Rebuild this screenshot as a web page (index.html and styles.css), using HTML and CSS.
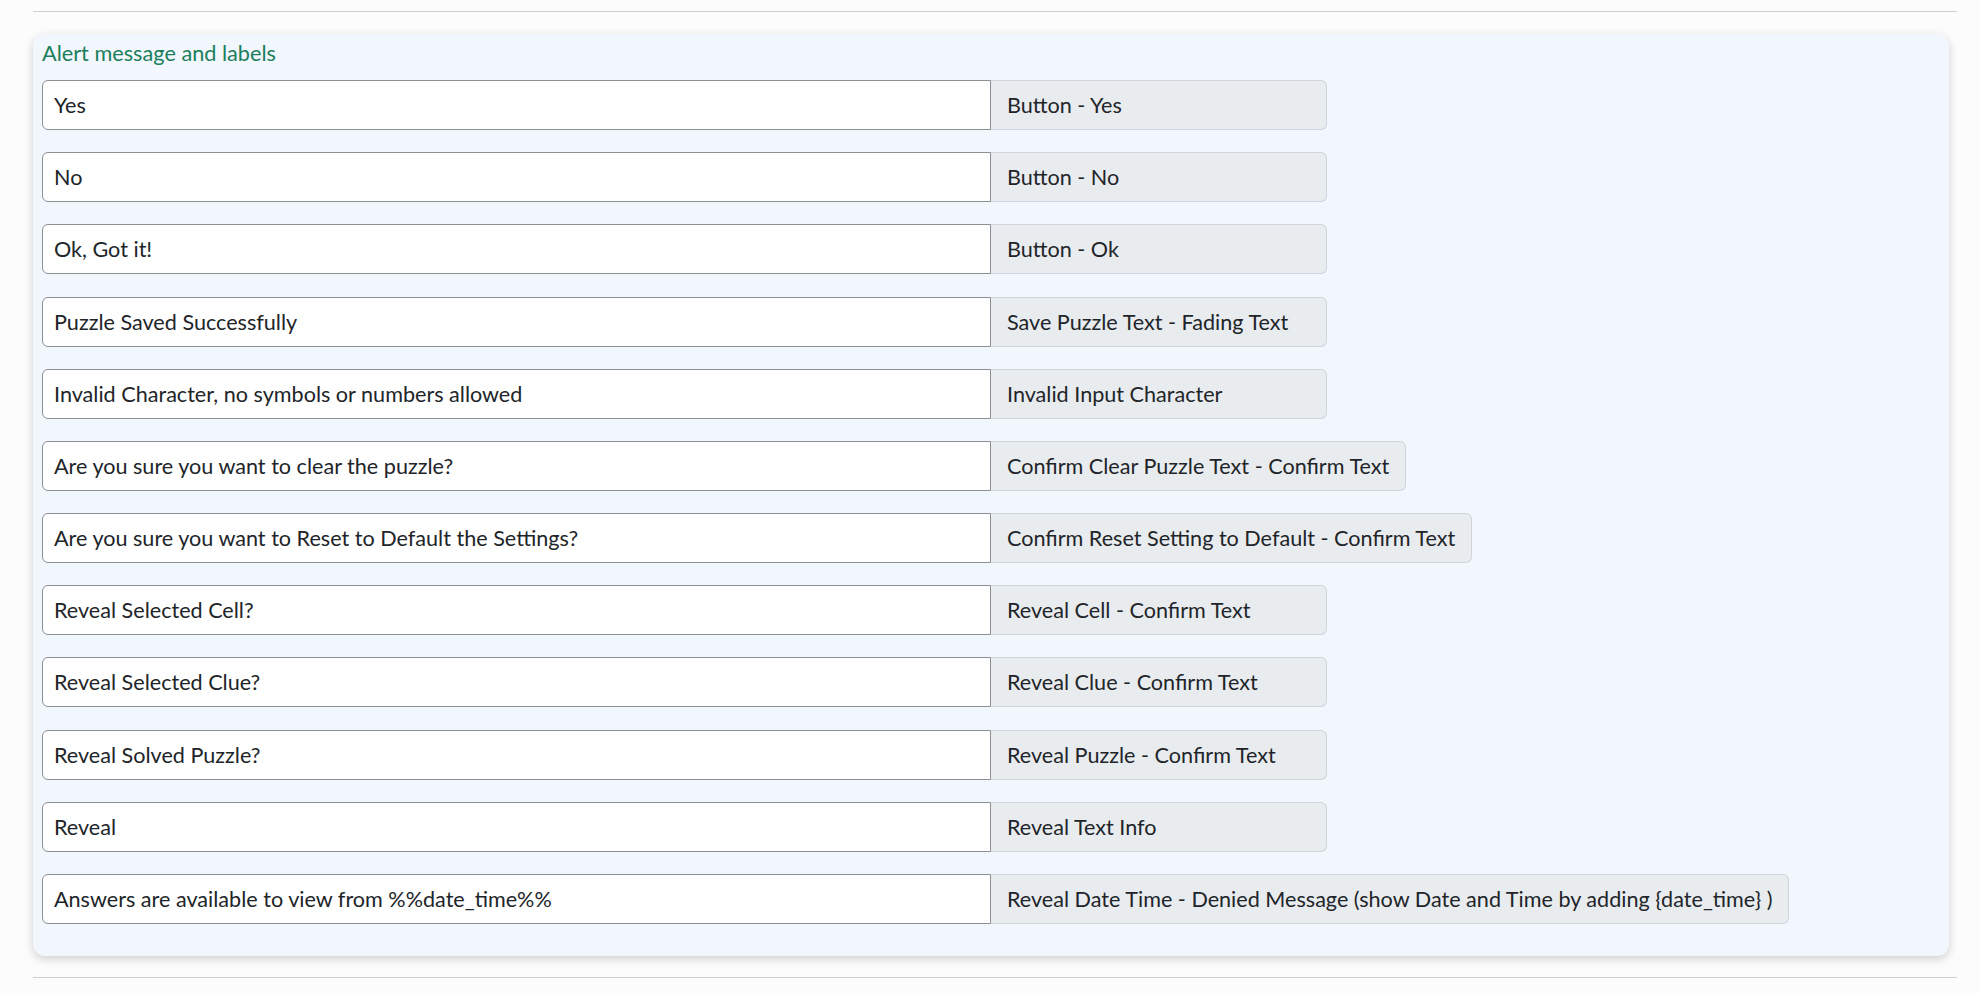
FILE: index.html
```html
<!DOCTYPE html>
<html lang="en">
<head>
<meta charset="utf-8">
<title>Alert message and labels</title>
<link rel="stylesheet" href="styles.css">
</head>
<body>
<div class="page">
  <hr class="rule">
  <section class="card">
    <h3 class="card-title">Alert message and labels</h3>
    <div class="rows">
      <div class="row"><input class="field" type="text" value="Yes"><span class="label">Button - Yes</span></div>
      <div class="row"><input class="field" type="text" value="No"><span class="label">Button - No</span></div>
      <div class="row"><input class="field" type="text" value="Ok, Got it!"><span class="label">Button - Ok</span></div>
      <div class="row"><input class="field" type="text" value="Puzzle Saved Successfully"><span class="label">Save Puzzle Text - Fading Text</span></div>
      <div class="row"><input class="field" type="text" value="Invalid Character, no symbols or numbers allowed"><span class="label">Invalid Input Character</span></div>
      <div class="row"><input class="field" type="text" value="Are you sure you want to clear the puzzle?"><span class="label">Confirm Clear Puzzle Text - Confirm Text</span></div>
      <div class="row"><input class="field" type="text" value="Are you sure you want to Reset to Default the Settings?"><span class="label">Confirm Reset Setting to Default - Confirm Text</span></div>
      <div class="row"><input class="field" type="text" value="Reveal Selected Cell?"><span class="label">Reveal Cell - Confirm Text</span></div>
      <div class="row"><input class="field" type="text" value="Reveal Selected Clue?"><span class="label">Reveal Clue - Confirm Text</span></div>
      <div class="row"><input class="field" type="text" value="Reveal Solved Puzzle?"><span class="label">Reveal Puzzle - Confirm Text</span></div>
      <div class="row"><input class="field" type="text" value="Reveal"><span class="label">Reveal Text Info</span></div>
      <div class="row"><input class="field" type="text" value="Answers are available to view from %%date_time%%"><span class="label">Reveal Date Time - Denied Message (show Date and Time by adding {date_time} )</span></div>
    </div>
  </section>
  <hr class="rule">
</div>
</body>
</html>
```
FILE: styles.css
```css
* { box-sizing: border-box; }
html, body { margin: 0; padding: 0; }
body {
  background: #fcfcfc;
  font-family: Lato, "Open Sans", sans-serif;
  color: #212529;
}
.page {
  padding: 11px 23px 0 33px;
}
.rule {
  margin: 0;
  border: 0;
  border-top: 1px solid #cfcfcf;
  height: 0;
}
.card {
  margin: 22px 8px 21px 0;
  background: #f2f6fd;
  border-radius: 12px;
  box-shadow: 0 3px 10px rgba(0, 0, 0, 0.18);
  padding: 6px 9px 32px;
}
.card-title {
  margin: 0 0 14px;
  font-size: 21.7px;
  line-height: 26px;
  font-weight: 400;
  color: #1b7f5b;
}
.rows {
  display: flex;
  flex-direction: column;
  gap: 22.18px;
}
.row {
  display: flex;
  align-items: stretch;
  height: 50px;
}
.field {
  width: 949px;
  flex: none;
  height: 50px;
  margin: 0;
  padding: 0 11px;
  font-family: inherit;
  font-size: 21.6px;
  color: #212529;
  background: #fff;
  border: 1px solid #8c8f94;
  border-radius: 6px 0 0 6px;
  outline: none;
}
.label {
  display: flex;
  align-items: center;
  min-width: 336px;
  padding: 0 16px;
  font-size: 21.6px;
  white-space: nowrap;
  background: #e9ecef;
  border: 1px solid #ced4da;
  border-left: 0;
  border-radius: 0 6px 6px 0;
}
```
